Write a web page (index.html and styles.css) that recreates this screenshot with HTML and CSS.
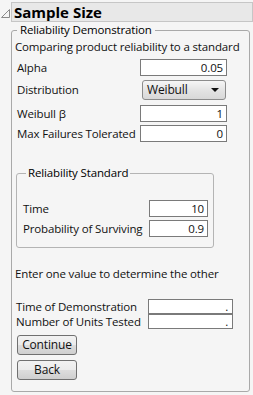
FILE: index.html
```html
<!DOCTYPE html>
<html>
<head>
<meta charset="utf-8">
<link rel="stylesheet" href="styles.css">
</head>
<body>
<div class="header">
  <svg class="disclosure" width="11" height="20" viewBox="0 0 11 20">
    <path d="M9.5 9.5 L9.5 17.5 L1.5 17.5 Z" fill="none" stroke="#8a8a8a" stroke-width="1"/>
  </svg>
  <div class="title">Sample Size</div>
</div>
<fieldset class="outer">
  <legend class="outer-legend">Reliability Demonstration</legend>
  <div class="intro">Comparing product reliability to a standard</div>
  <div class="row r-alpha"><span class="label">Alpha</span><span class="field f-main">0.05</span></div>
  <div class="row r-dist"><span class="label">Distribution</span><span class="select"><span>Weibull</span><span class="arrow"></span></span></div>
  <div class="row r-beta"><span class="label">Weibull β</span><span class="field f-main">1</span></div>
  <div class="row r-max"><span class="label">Max Failures Tolerated</span><span class="field f-main">0</span></div>
  <fieldset class="inner">
    <legend class="inner-legend">Reliability Standard</legend>
    <div class="row r-time"><span class="label">Time</span><span class="field f-inner">10</span></div>
    <div class="row r-prob"><span class="label">Probability of Surviving</span><span class="field f-inner">0.9</span></div>
  </fieldset>
  <div class="note">Enter one value to determine the other</div>
  <div class="pair">
    <div class="row r-tod"><span class="label">Time of Demonstration</span><span class="field f-calc">.</span></div>
    <div class="row r-num"><span class="label">Number of Units Tested</span><span class="field f-calc">.</span></div>
  </div>
  <div class="buttons">
    <button class="btn">Continue</button>
    <button class="btn">Back</button>
  </div>
</fieldset>
</body>
</html>
```
FILE: styles.css
```css
* { box-sizing: border-box; }
html, body { margin: 0; padding: 0; }
body {
  background: #f5f5f5;
  font-family: "Open Sans", "Noto Sans", sans-serif;
  font-size: 11.5px;
  letter-spacing: -0.15px;
  line-height: 14px;
  color: #111;
  width: 253px;
  height: 395px;
  overflow: hidden;
}
.header {
  display: flex;
  align-items: flex-start;
  padding-top: 2px;
  height: 22px;
}
.disclosure { display: block; flex: 0 0 11px; margin-top: -2px; }
.title {
  width: 242px;
  height: 20px;
  background: #e8e8e8;
  border: 1px solid #c6c6c6;
  font-weight: bold;
  font-size: 15px;
  letter-spacing: 0;
  line-height: 18px;
  padding-left: 2px;
  color: #000;
}
fieldset { margin: 0; min-width: 0; }
.outer {
  margin: 1px 0 0 11px;
  width: 239px;
  height: 369px;
  border: 1px solid #a9a9a9;
  border-radius: 3px;
  padding: 0 0 0 3px;
}
legend {
  padding: 0 3px;
  line-height: 14px;
  color: #000;
}
.outer-legend { margin-left: 2px; }
.intro { margin-top: 3px; }
.row {
  display: flex;
  align-items: center;
  justify-content: space-between;
}
.label { white-space: nowrap; }
.r-alpha, .r-dist, .r-beta, .r-max { padding-left: 2px; width: 212px; }
.r-alpha { margin-top: 5px; height: 17px; }
.r-dist { margin-top: 4px; height: 20px; }
.r-beta { margin-top: 5px; height: 17px; }
.r-max { margin-top: 3px; height: 17px; }
.field {
  display: block;
  height: 100%;
  background: #fff;
  border: 1px solid #7a7a7a;
  text-align: right;
  padding-right: 3px;
  line-height: 15px;
}
.f-main { width: 87px; }
.select {
  display: flex;
  align-items: center;
  justify-content: space-between;
  width: 84px;
  height: 20px;
  margin-right: 1px;
  border: 1px solid #8c8c8c;
  border-radius: 3px;
  background: linear-gradient(#f6f6f6, #e4e4e4 50%, #d8d8d8);
  padding: 0 6px 0 4px;
  font-size: 12px;
}
.arrow {
  width: 0; height: 0;
  border-left: 4px solid transparent;
  border-right: 4px solid transparent;
  border-top: 4px solid #111;
}
.inner {
  margin: 24px 0 0 1px;
  width: 198px;
  border: 1px solid #b4b4b4;
  border-radius: 3px;
  padding: 0 5px 10px 6px;
}
.inner-legend { margin-left: 3px; padding: 0 2px; }
.r-time { margin-top: 20px; height: 17px; }
.r-prob { margin-top: 3px; height: 17px; }
.f-inner { width: 59px; }
.note { margin-top: 19px; }
.pair { margin-top: 18px; width: 218px; }
.r-tod, .r-num { height: 15px; padding-left: 1px; }
.f-calc { width: 85px; line-height: 14px; padding-right: 4px; }
.buttons {
  display: flex;
  flex-direction: column;
  align-items: flex-start;
  gap: 5px;
  margin-top: 6px;
  padding-left: 2px;
}
.btn {
  width: 60px;
  height: 20px;
  font-family: inherit;
  font-size: 12px;
  letter-spacing: -0.15px;
  line-height: 16px;
  color: #111;
  padding: 0;
  border: 1px solid #707070;
  border-radius: 3px;
  background: linear-gradient(#f2f2f2, #ebebeb 50%, #dddddd 51%, #cfcfcf);
}
```
